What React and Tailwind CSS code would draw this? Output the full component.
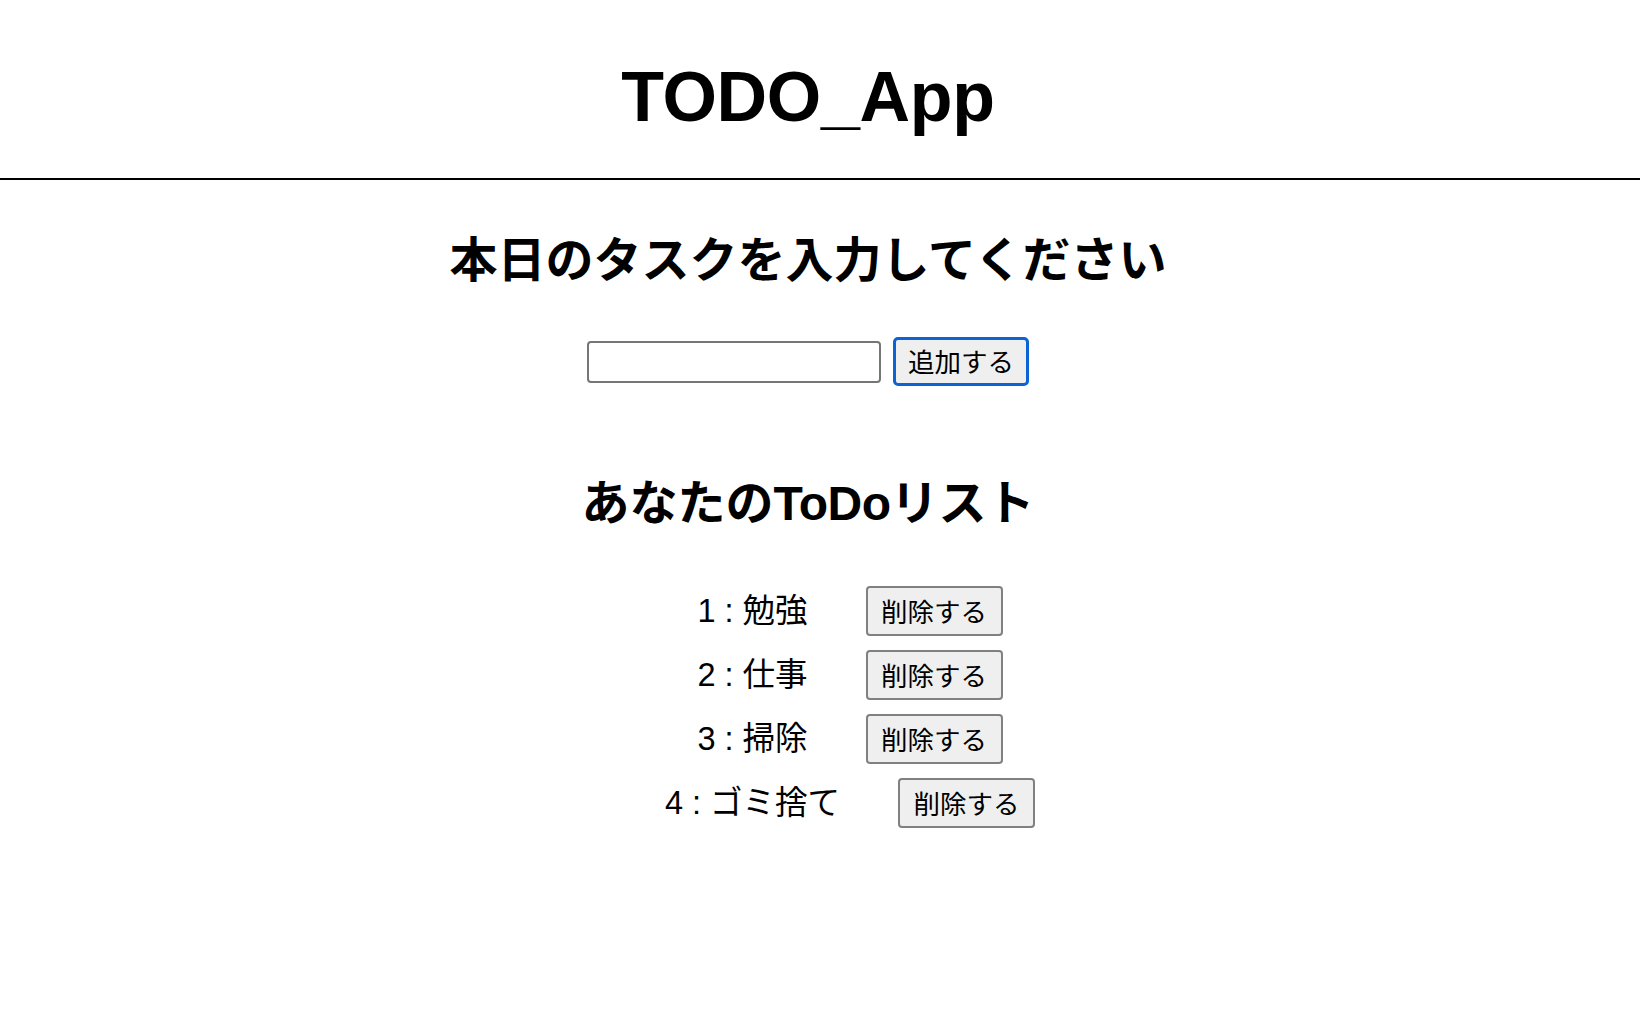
import React from "react";

const todos = ["勉強", "仕事", "掃除", "ゴミ捨て"];

export default function App() {
  return (
    <div className="min-h-screen bg-white text-black font-['Noto_Sans_CJK_JP',sans-serif]">
      <header className="h-[180px] pt-[15px] pr-[24px] border-b-2 border-black flex items-center justify-center">
        <h1 className="font-['Liberation_Sans','Noto_Sans_CJK_JP',sans-serif] font-bold text-[70px] leading-none tracking-[-0.3px]">
          TODO_App
        </h1>
      </header>
      <main className="pr-[24px] flex flex-col items-center">
        <h2 className="mt-[52px] text-[48px] leading-none font-bold">
          本日のタスクを入力してください
        </h2>
        <div className="mt-[57px] flex items-center gap-[12px]">
          <input
            type="text"
            className="w-[294px] h-[42px] border-2 border-[#767676] rounded-[4px] bg-white px-2 text-[26px] outline-none"
          />
          <button className="w-[136px] h-[49px] border-[3px] border-[#0b63d4] rounded-[5px] bg-[#efefef] text-[26.5px] leading-none flex items-center justify-center">
            追加する
          </button>
        </div>
        <h2 className="mt-[89px] h-[48px] text-[48px] leading-none font-bold flex items-baseline">
          <span>あなたの</span>
          <span className="font-['Liberation_Sans',sans-serif] tracking-[-0.5px]">ToDo</span>
          <span>リスト</span>
        </h2>
        <ul className="mt-[63px] flex flex-col gap-[14px] w-full">
          {todos.map((t, i) => (
            <li key={t} className="pl-[84px] flex items-center justify-center">
              <span className="text-[32.5px] leading-none font-['Liberation_Sans','Noto_Sans_CJK_JP',sans-serif]">
                {i + 1} : {t}
              </span>
              <button className="ml-[58px] w-[137px] h-[50px] border-2 border-[#808080] rounded-[4px] bg-[#efefef] text-[26.5px] leading-none flex items-center justify-center">
                削除する
              </button>
            </li>
          ))}
        </ul>
      </main>
    </div>
  );
}
